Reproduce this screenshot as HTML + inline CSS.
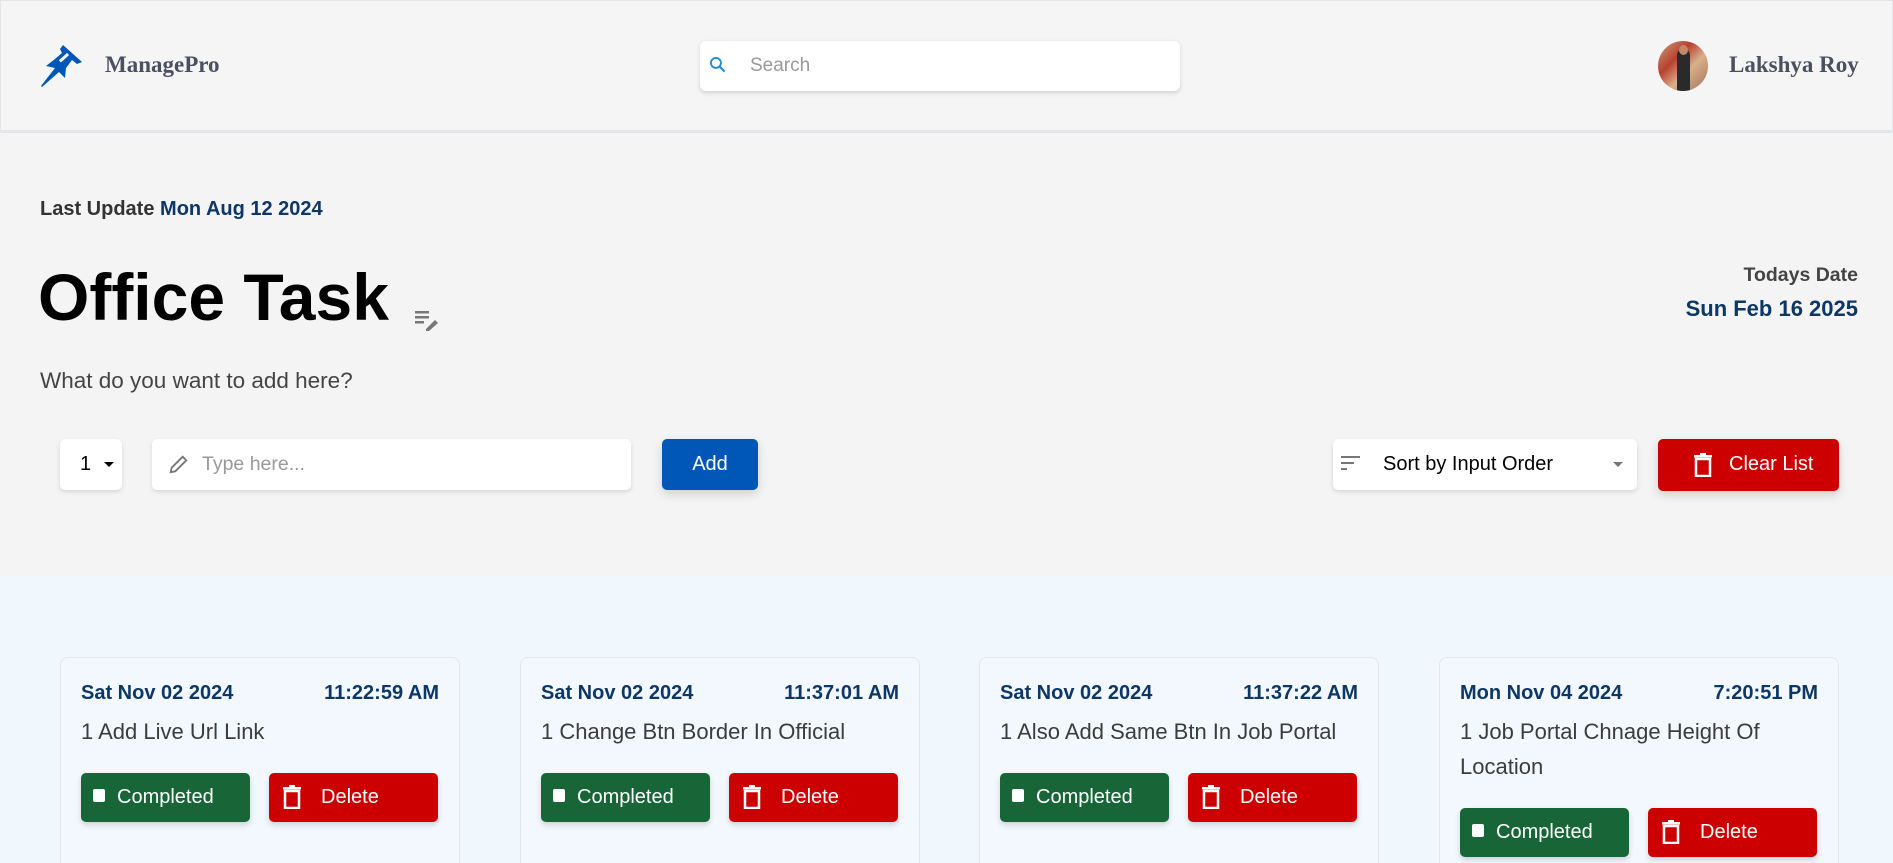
<!DOCTYPE html>
<html><head><meta charset="utf-8"><style>
*{box-sizing:border-box;margin:0;padding:0}
html{width:1893px;height:863px;overflow:hidden}
body{width:1893px;height:863px;overflow:hidden;font-family:"Liberation Sans",sans-serif;background:#f4f4f4;position:relative}
.abs{position:absolute}
.hdr{left:0;top:0;width:1893px;height:133px;background:#f5f5f5;border:1px solid #e2e6ea;border-bottom:3px solid #e3e7ec}
.serif{font-family:"Liberation Serif",serif;font-weight:bold;color:#4a5060;font-size:23px}
.search{left:700px;top:41px;width:480px;height:50px;background:#fff;border-radius:6px;box-shadow:0 2px 5px rgba(0,0,0,.15)}
.box{background:#fff;border-radius:5px;box-shadow:0 2px 5px rgba(0,0,0,.12)}
.navy{color:#0d3766}
.lower{left:0;top:576px;width:1893px;height:287px;background:#f0f7fd;overflow:hidden}
.card{top:81px;width:400px;height:240px;border:1px solid #e2e7ee;border-radius:8px;background:#f2f8fe}
.card .d{position:absolute;left:20px;top:24px;font-size:20px;font-weight:bold;color:#0d3766}
.card .t{position:absolute;right:20px;top:24px;font-size:20px;font-weight:bold;color:#0d3766}
.card .ti{position:absolute;left:20px;top:56px;width:345px;font-size:22px;line-height:35px;color:#3c3c3c}
.btn{position:absolute;width:169px;height:49px;border-radius:5px;color:#fff;font-size:20px;box-shadow:0 3px 6px rgba(0,0,0,.15)}
.g{background:#186637;left:20px}
.r{background:#cc0000;left:208px}
.cb{position:absolute;left:12px;top:16px;width:12px;height:13px;background:#fff;border-radius:2px}
</style></head><body>
<div class="abs hdr"></div>
<svg class="abs" style="left:40px;top:44px" width="46" height="44" viewBox="0 0 46 44"><path d="M23 1 L42 18 L37 20 L32 16 L26 24 L25 34 L19 28 L2 43 L1 42 L15 24 L6 22 L15 15 L22 9 L20 5 Z" fill="#0057b7"/><rect x="18" y="12" width="11" height="3" fill="#f5f5f5" transform="rotate(-42 24 13)"/></svg>
<div class="abs serif" style="left:105px;top:52px">ManagePro</div>
<div class="abs search"><svg class="abs" style="left:8px;top:14px" width="20" height="20" viewBox="0 0 24 24"><circle cx="9.5" cy="9.5" r="6" fill="none" stroke="#1e88e5" stroke-width="2.2"/><path d="M14 14 L20 20" stroke="#1e88e5" stroke-width="2.5"/></svg><span class="abs" style="left:50px;top:14px;font-size:19px;color:#999">Search</span></div>
<div class="abs" style="left:1658px;top:41px;width:50px;height:50px;border-radius:50%;overflow:hidden;background:linear-gradient(135deg,#c8a47e 0%,#b84030 35%,#d8b08a 60%,#a0705a 100%)"><div class="abs" style="left:19px;top:8px;width:13px;height:42px;background:#2a2a2a;border-radius:6px 6px 0 0"></div><div class="abs" style="left:21px;top:4px;width:9px;height:10px;background:#c08a6a;border-radius:50%"></div></div>
<div class="abs serif" style="left:1729px;top:52px">Lakshya Roy</div>

<div class="abs" style="left:40px;top:198px;font-size:20px;font-weight:bold;color:#333">Last Update <span class="navy">Mon Aug 12 2024</span></div>
<div class="abs" style="left:38px;top:257px;font-size:66px;font-weight:bold;color:#000;line-height:80px">Office Task</div>
<svg class="abs" style="left:415px;top:310px" width="25" height="21" viewBox="0 0 25 21"><rect x="0" y="1" width="14" height="2.5" fill="#777"/><rect x="0" y="6" width="14" height="2.5" fill="#777"/><rect x="0" y="11" width="9" height="2.5" fill="#777"/><path d="M11 19 L20 10 L23 13 L14 21 L11 21 Z" fill="#777"/></svg>
<div class="abs" style="right:35px;top:264px;font-size:19.5px;font-weight:bold;color:#444;text-align:right">Todays Date</div>
<div class="abs navy" style="right:35px;top:296px;font-size:22px;font-weight:bold">Sun Feb 16 2025</div>
<div class="abs" style="left:40px;top:368px;font-size:22.5px;color:#444">What do you want to add here?</div>

<div class="abs box" style="left:60px;top:439px;width:62px;height:51px"><span class="abs" style="left:20px;top:14px;font-size:20px">1</span><span class="abs" style="left:44px;top:23px;border:5px solid transparent;border-top:5px solid #000;border-bottom:0"></span></div>
<div class="abs box" style="left:152px;top:439px;width:479px;height:51px"><svg class="abs" style="left:16px;top:14px" width="22" height="22" viewBox="0 0 24 24"><path d="M3 21 L4 16 L16 4 L20 8 L8 20 Z" fill="none" stroke="#777" stroke-width="2"/></svg><span class="abs" style="left:50px;top:14px;font-size:19.5px;color:#999">Type here...</span></div>
<div class="abs" style="left:662px;top:439px;width:96px;height:51px;background:#0057b7;border-radius:5px;color:#fff;font-size:20px;text-align:center;line-height:51px;box-shadow:0 4px 10px rgba(0,0,0,.15)">Add</div>
<div class="abs box" style="left:1333px;top:439px;width:304px;height:51px"><svg class="abs" style="left:8px;top:17px" width="20" height="16"><rect y="0" width="19" height="2" fill="#777"/><rect y="6" width="13" height="2" fill="#777"/><rect y="12" width="6" height="2" fill="#777"/></svg><span class="abs" style="left:50px;top:14px;font-size:20px;color:#000">Sort by Input Order</span><span class="abs" style="left:280px;top:23px;border:5px solid transparent;border-top:5px solid #777;border-bottom:0"></span></div>
<div class="abs" style="left:1658px;top:439px;width:181px;height:52px;background:#cc0000;border-radius:5px;box-shadow:0 4px 10px rgba(0,0,0,.15)"><svg class="abs" style="left:36px;top:14px" width="18" height="24" viewBox="0 0 18 24"><rect x="2" y="6" width="14" height="17" fill="none" stroke="#fff" stroke-width="2.5"/><rect x="0" y="2" width="18" height="2.5" fill="#fff"/><rect x="6" y="0" width="6" height="3" fill="#fff"/></svg><span class="abs" style="left:71px;top:14px;font-size:20px;color:#fff">Clear List</span></div>

<div class="abs lower">
<div class="abs card" style="left:60px"><div class="d">Sat Nov 02 2024</div><div class="t">11:22:59 AM</div><div class="ti">1 Add Live Url Link</div>
<div class="btn g" style="top:115px"><span class="cb"></span><span class="abs" style="left:36px;top:13px">Completed</span></div>
<div class="btn r" style="top:115px"><svg class="abs" style="left:14px;top:12px" width="18" height="24" viewBox="0 0 18 24"><rect x="2" y="6" width="14" height="17" fill="none" stroke="#fff" stroke-width="2.5"/><rect x="0" y="2" width="18" height="2.5" fill="#fff"/><rect x="6" y="0" width="6" height="3" fill="#fff"/></svg><span class="abs" style="left:52px;top:13px">Delete</span></div></div>

<div class="abs card" style="left:520px"><div class="d">Sat Nov 02 2024</div><div class="t">11:37:01 AM</div><div class="ti">1 Change Btn Border In Official</div>
<div class="btn g" style="top:115px"><span class="cb"></span><span class="abs" style="left:36px;top:13px">Completed</span></div>
<div class="btn r" style="top:115px"><svg class="abs" style="left:14px;top:12px" width="18" height="24" viewBox="0 0 18 24"><rect x="2" y="6" width="14" height="17" fill="none" stroke="#fff" stroke-width="2.5"/><rect x="0" y="2" width="18" height="2.5" fill="#fff"/><rect x="6" y="0" width="6" height="3" fill="#fff"/></svg><span class="abs" style="left:52px;top:13px">Delete</span></div></div>

<div class="abs card" style="left:979px"><div class="d">Sat Nov 02 2024</div><div class="t">11:37:22 AM</div><div class="ti">1 Also Add Same Btn In Job Portal</div>
<div class="btn g" style="top:115px"><span class="cb"></span><span class="abs" style="left:36px;top:13px">Completed</span></div>
<div class="btn r" style="top:115px"><svg class="abs" style="left:14px;top:12px" width="18" height="24" viewBox="0 0 18 24"><rect x="2" y="6" width="14" height="17" fill="none" stroke="#fff" stroke-width="2.5"/><rect x="0" y="2" width="18" height="2.5" fill="#fff"/><rect x="6" y="0" width="6" height="3" fill="#fff"/></svg><span class="abs" style="left:52px;top:13px">Delete</span></div></div>

<div class="abs card" style="left:1439px"><div class="d">Mon Nov 04 2024</div><div class="t">7:20:51 PM</div><div class="ti">1 Job Portal Chnage Height Of Location</div>
<div class="btn g" style="top:150px"><span class="cb"></span><span class="abs" style="left:36px;top:13px">Completed</span></div>
<div class="btn r" style="top:150px"><svg class="abs" style="left:14px;top:12px" width="18" height="24" viewBox="0 0 18 24"><rect x="2" y="6" width="14" height="17" fill="none" stroke="#fff" stroke-width="2.5"/><rect x="0" y="2" width="18" height="2.5" fill="#fff"/><rect x="6" y="0" width="6" height="3" fill="#fff"/></svg><span class="abs" style="left:52px;top:13px">Delete</span></div></div>
</div>
</body></html>
